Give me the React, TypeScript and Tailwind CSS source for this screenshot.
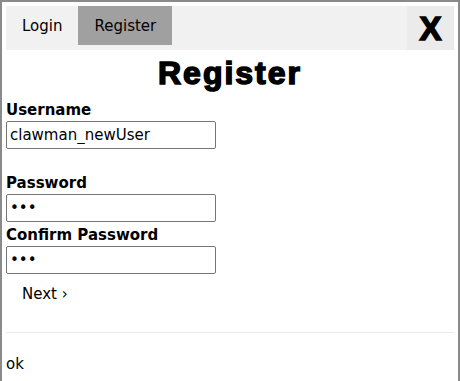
import React from 'react'

const sans = "font-['DejaVu_Sans',_'Liberation_Sans',_sans-serif]"

export default function App() {
    return (
        <div className={`${sans} min-h-[400px] border-2 border-[#8a8a8a] p-1 text-[15px] text-black`}>
            <div className="flex h-[44px] items-start bg-[#f1f1f1]">
                <button className="flex h-[39px] items-center px-4 leading-[18px]">Login</button>
                <button className="flex h-[39px] items-center bg-[#a0a0a0] px-4 leading-[18px]">Register</button>
                <div className="flex-1" />
                <button className="flex h-full w-[47px] items-center justify-center bg-[#ebebeb] font-['Liberation_Sans',_Arial,_sans-serif] text-[33px] font-bold leading-none [-webkit-text-stroke:1.5px_black]">
                    X
                </button>
            </div>

            <h1 className="mt-[5px] text-center font-['Liberation_Sans',_Arial,_sans-serif] text-[32px] font-bold leading-[36px] tracking-[2px] [-webkit-text-stroke:1.5px_black]">
                Register
            </h1>

            <form className="flex flex-col items-start">
                <label className="mt-[10px] block font-bold leading-[18px]">Username</label>
                <input
                    type="text"
                    defaultValue="clawman_newUser"
                    className="mt-[2px] h-[28px] w-[210px] rounded-[2px] border border-[#767676] px-[3px] leading-[18px] outline-none"
                />

                <label className="mt-[25px] block font-bold leading-[18px]">Password</label>
                <input
                    type="password"
                    defaultValue="abc"
                    className="mt-[2px] h-[28px] w-[210px] rounded-[2px] border border-[#767676] px-[3px] leading-[18px] outline-none"
                />

                <label className="mt-[4px] block font-bold leading-[18px]">Confirm Password</label>
                <input
                    type="password"
                    defaultValue="abc"
                    className="mt-[2px] h-[28px] w-[210px] rounded-[2px] border border-[#767676] px-[3px] leading-[18px] outline-none"
                />

                <button type="button" className="px-4 pt-[11px] pb-[10px] leading-[18px]">
                    Next ›
                </button>
            </form>

            <hr className="mt-[19px] border-t border-[#ebebeb]" />

            <p className="mt-[22px] leading-[18px]">ok</p>
        </div>
    )
}
